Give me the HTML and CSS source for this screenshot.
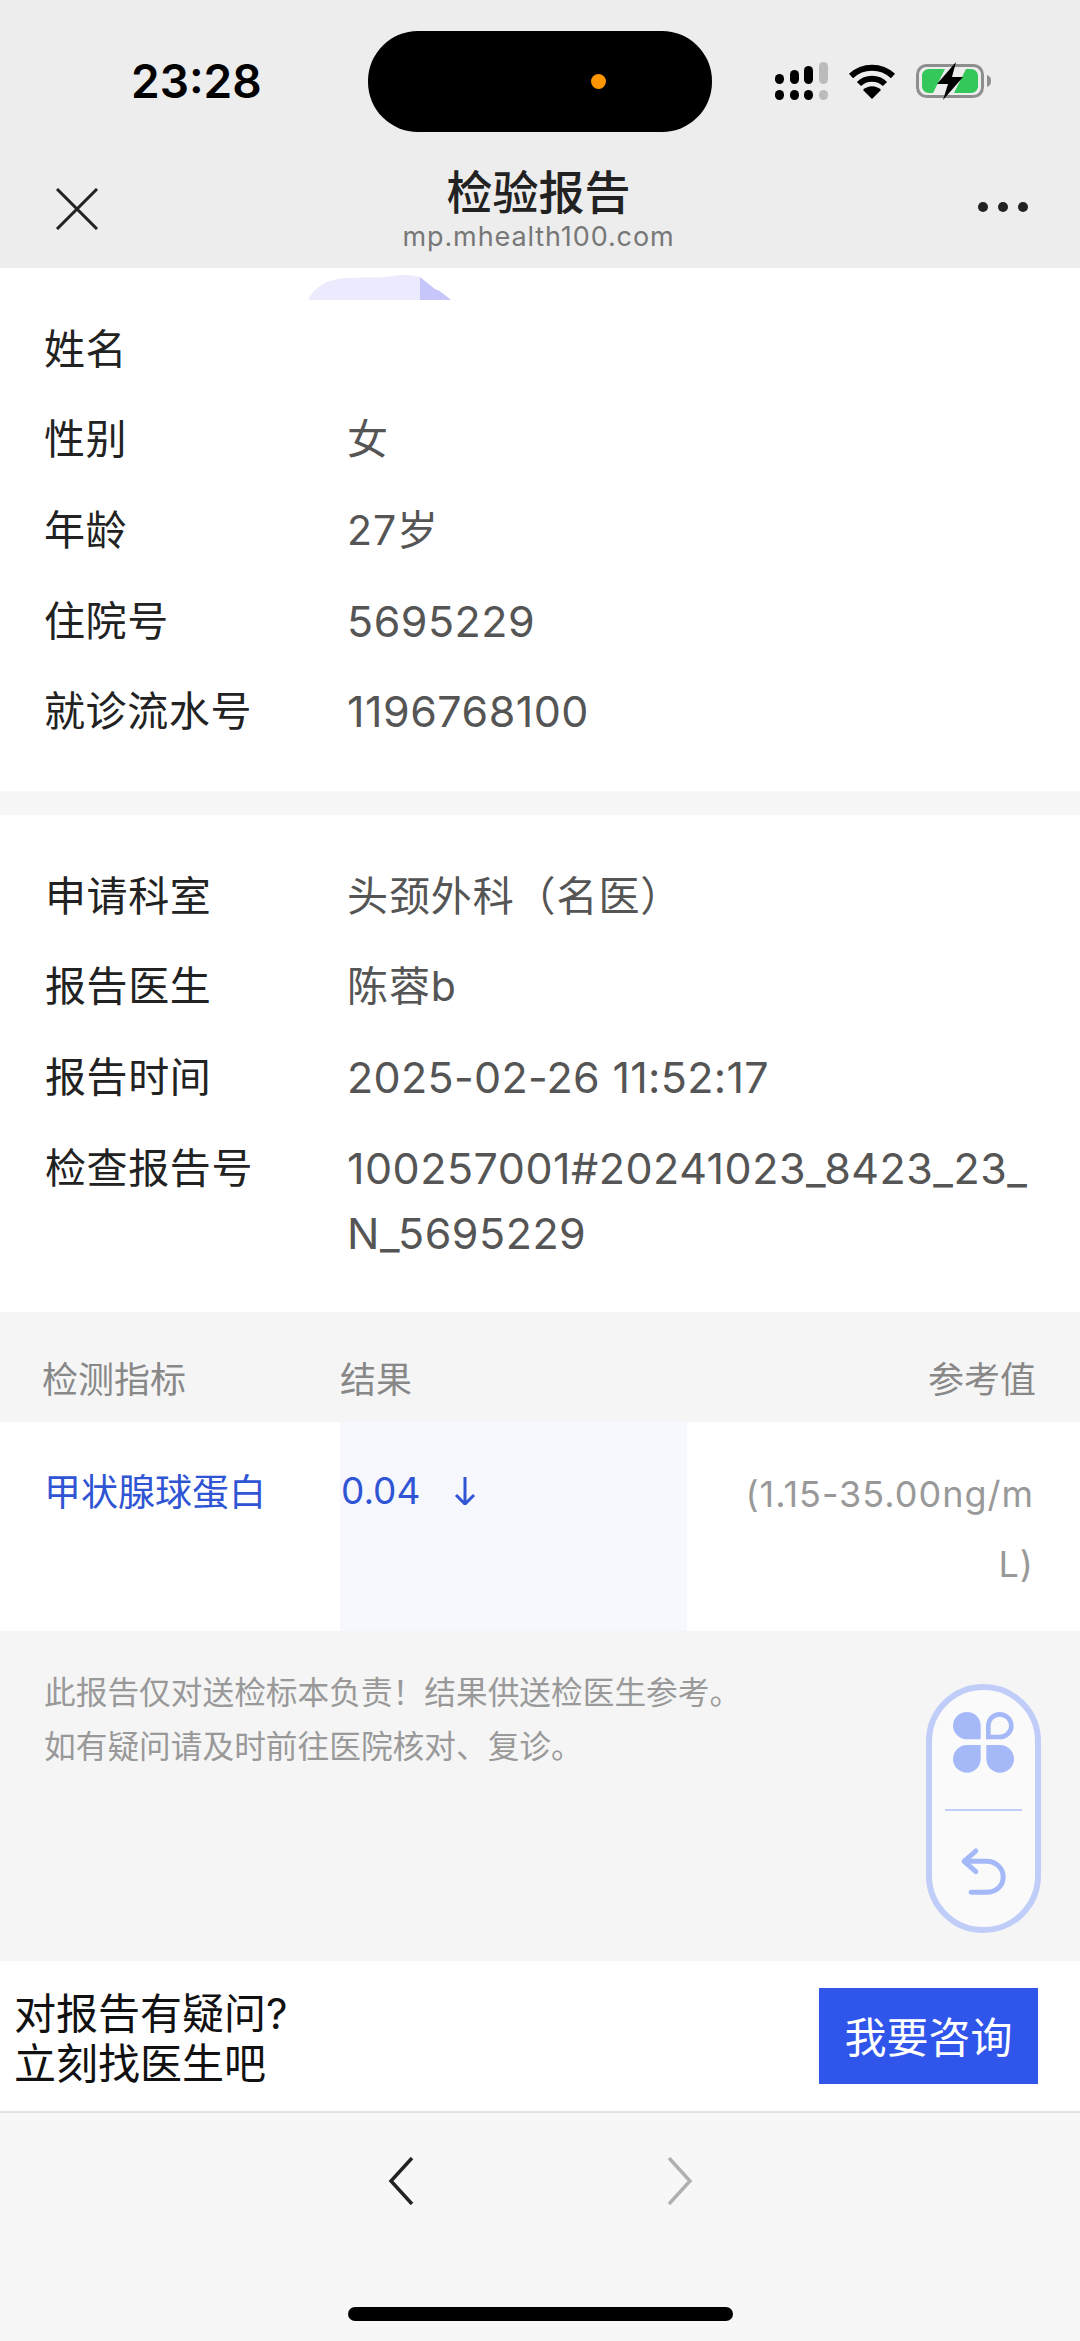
FILE: index.html
```html
<!DOCTYPE html>
<html lang="zh">
<head>
    <meta charset="utf-8">
    <link rel="stylesheet" href="styles.css">
</head>
<body>
    <div class="top">
        <div class="status">
            <span class="time">23:28</span>
            <div class="island"><span class="dot"></span></div>
            <svg class="signal" viewBox="0 0 54 38">
                <rect x="0" y="12" width="9" height="10" rx="4.5"/>
                <rect x="15" y="8" width="9" height="14" rx="4.5"/>
                <rect x="29" y="4" width="9" height="18" rx="4.5"/>
                <rect x="44" y="0" width="9" height="22" rx="4.5" fill="#bbb"/>
                <rect x="0" y="28" width="9" height="10" rx="4.5"/>
                <rect x="15" y="28" width="9" height="10" rx="4.5"/>
                <rect x="29" y="28" width="9" height="10" rx="4.5"/>
                <rect x="44" y="28" width="9" height="10" rx="4.5" fill="#bbb"/>
            </svg>
            <svg class="wifi" viewBox="0 0 48 36">
                <path d="M3 13C15 2 33 2 45 13" fill="none" stroke="#000" stroke-width="6"/>
                <path d="M11 21C18 14 30 14 37 21" fill="none" stroke="#000" stroke-width="6"/>
                <path d="M15 27C20 22 28 22 33 27L24 36Z"/>
            </svg>
            <svg class="battery" viewBox="0 0 76 38">
                <rect x="1.5" y="3.5" width="65" height="31" rx="9" fill="none" stroke="#8e8e8e" stroke-width="3"/>
                <path d="M13 7H29L17 31H13C9 31 6 28 6 24V14C6 10 9 7 13 7ZM40 7H55C59 7 62 10 62 14V24C62 28 59 31 55 31H38L50 7Z" fill="#34c759"/>
                <path d="M40 0L21 22H32L27 38L47 15H36Z"/>
                <path d="M71 13C74 14 75 16 75 19C75 22 74 24 71 25Z" fill="#8e8e8e"/>
            </svg>
        </div>
        <div class="titlebar">
            <svg class="close" viewBox="0 0 44 42">
                <path d="M2 1L42 41M42 1L2 41" fill="none" stroke="#222" stroke-width="3"/>
            </svg>
            <div class="title">
                <div class="title-main">检验报告</div>
                <div class="title-url">mp.mhealth100.com</div>
            </div>
            <div class="more"><i></i><i></i><i></i></div>
        </div>
    </div>

    <div class="section section-patient">
        <svg class="blob" viewBox="0 0 143 25">
            <path d="M0 25C8 10 20 4 40 3C60 2 75 3 85 1C95 -1 105 0 112 2V25Z" fill="#ecebfd"/>
            <path d="M112 2L127 14C133 16 137 20 143 25H112Z" fill="#c6c6fa"/>
        </svg>
        <div class="row"><span class="label">姓名</span><span class="value"></span></div>
        <div class="row"><span class="label">性别</span><span class="value">女</span></div>
        <div class="row"><span class="label">年龄</span><span class="value">27岁</span></div>
        <div class="row"><span class="label">住院号</span><span class="value num">5695229</span></div>
        <div class="row"><span class="label">就诊流水号</span><span class="value num">1196768100</span></div>
    </div>

    <div class="section section-report">
        <div class="row"><span class="label">申请科室</span><span class="value">头颈外科（名医）</span></div>
        <div class="row"><span class="label">报告医生</span><span class="value">陈蓉b</span></div>
        <div class="row"><span class="label">报告时间</span><span class="value num date">2025-02-26 11:52:17</span></div>
        <div class="row"><span class="label">检查报告号</span><span class="value num">100257001#20241023_8423_23_N_5695229</span></div>
    </div>

    <div class="table-head">
        <span class="th-name">检测指标</span>
        <span class="th-result">结果</span>
        <span class="th-ref">参考值</span>
    </div>
    <div class="table-row">
        <div class="td-name">甲状腺球蛋白</div>
        <div class="td-result">
            <span>0.04</span>
            <svg class="down" viewBox="0 0 22 28">
                <path d="M11 0V27M2 18L11 27L20 18" fill="none" stroke="#2f55d4" stroke-width="3"/>
            </svg>
        </div>
        <div class="td-ref">(1.15-35.00ng/mL)</div>
    </div>

    <div class="notes">
        <p>此报告仅对送检标本负责！结果供送检医生参考。</p>
        <p>如有疑问请及时前往医院核对、复诊。</p>
        <div class="float-btn">
            <svg class="clover" viewBox="220 155 183 183">
                <path d="M303 237H262C239 237 220 218 220 196C220 173 239 155 262 155C285 155 303 173 303 196Z" fill="#a5b9f8"/>
                <path d="M326 230H360C379 230 395 215 395 196C395 177 379 162 360 162C341 162 326 177 326 196Z" fill="none" stroke="#a5b9f8" stroke-width="14"/>
                <path d="M303 254V296C303 319 285 337 262 337C239 337 220 319 220 296C220 273 239 254 262 254Z" fill="#a5b9f8"/>
                <path d="M320 254H361C384 254 403 273 403 296C403 319 384 337 361 337C338 337 320 319 320 296Z" fill="#a5b9f8"/>
            </svg>
            <div class="float-line"></div>
            <svg class="back" viewBox="240 562 146 150">
                <path d="M290 574L255 605L290 636M255 605H322C350 605 372 625 372 652C372 680 350 698 322 698H276" fill="none" stroke="#a5b9f8" stroke-width="15" stroke-linecap="round" stroke-linejoin="round"/>
            </svg>
        </div>
    </div>

    <div class="cta">
        <div class="cta-text">对报告有疑问?<br>立刻找医生吧</div>
        <div class="cta-btn">我要咨询</div>
    </div>

    <div class="toolbar">
        <div class="arrows">
            <svg class="chevron" viewBox="0 0 26 48">
                <path d="M24 1L3 24L24 47" fill="none" stroke="#222" stroke-width="3.5"/>
            </svg>
            <svg class="chevron" viewBox="0 0 26 48">
                <path d="M2 1L23 24L2 47" fill="none" stroke="#b0b0b0" stroke-width="3.5"/>
            </svg>
        </div>
        <div class="home-bar"></div>
    </div>
</body>
</html>
```

FILE: styles.css
```css
* {
    box-sizing: border-box;
}

body {
    margin: 0;
    width: 1080px;
    height: 2341px;
    overflow: hidden;
    background: #f7f7f7;
    font-family: Inter, "Noto Sans CJK SC", sans-serif;
    color: #222;
}

p {
    margin: 0;
}

/* top bar */
.top {
    height: 268px;
    background: #ededed;
}

.status {
    height: 149px;
    padding-top: 31px;
    display: flex;
    align-items: flex-start;
}

.time {
    width: 237px;
    margin-left: 131px;
    margin-top: 17px;
    font-size: 46px;
    line-height: 66px;
    font-weight: 600;
    color: #000;
}

.island {
    width: 344px;
    height: 101px;
    border-radius: 50px;
    background: #000;
    position: relative;
}

.dot {
    position: absolute;
    left: 223px;
    top: 43px;
    width: 15px;
    height: 15px;
    border-radius: 50%;
    background: #ff9500;
}

.signal {
    width: 54px;
    height: 38px;
    margin: 31px 0 0 63px;
}

.wifi {
    width: 48px;
    height: 36px;
    margin: 32px 0 0 19px;
}

.battery {
    width: 76px;
    height: 38px;
    margin: 31px 0 0 20px;
}

.titlebar {
    height: 119px;
    display: flex;
    align-items: flex-start;
    justify-content: space-between;
    padding: 0 52px 0 55px;
}

.close {
    width: 44px;
    height: 42px;
    margin-top: 39px;
}

.title {
    text-align: center;
    margin-top: 15px;
}

.title-main {
    font-size: 46px;
    line-height: 56px;
    font-weight: 500;
}

.title-url {
    font-size: 27px;
    line-height: 34px;
    color: #777;
    letter-spacing: 0.9px;
}

.more {
    display: flex;
    gap: 10px;
    margin-top: 53px;
}

.more i {
    width: 10px;
    height: 10px;
    border-radius: 50%;
    background: #222;
}

/* info sections */
.section {
    background: #fff;
    position: relative;
}

.section-patient {
    padding: 36px 0 34px 44px;
}

.section-report {
    margin-top: 24px;
    padding: 36px 0 34px 45px;
}

.blob {
    position: absolute;
    left: 308px;
    top: 7px;
    width: 143px;
    height: 25px;
}

.row {
    display: flex;
    padding: 12.8px 0;
    font-size: 41px;
    line-height: 65px;
}

.label {
    flex: none;
    color: #222;
    letter-spacing: 0.6px;
}

.section-patient .label {
    width: 303px;
}

.section-report .label {
    width: 302px;
}

.value {
    width: 690px;
    color: #555;
    letter-spacing: 0.9px;
    word-break: break-all;
}

.num {
    font-size: 43px;
    letter-spacing: 0.5px;
}

.date {
    letter-spacing: 0.3px;
}

/* table */
.table-head {
    height: 110px;
    background: #f5f5f5;
    display: grid;
    grid-template-columns: 298px 1fr auto;
    align-items: center;
    padding: 20px 44px 0 42px;
    font-size: 36px;
    color: #888;
}

.table-row {
    height: 209px;
    background: #fff;
    display: grid;
    grid-template-columns: 340px 347px 393px;
    font-size: 37px;
    line-height: 70px;
}

.td-name {
    padding: 36px 0 0 44px;
    color: #2f55d4;
}

.td-result {
    padding: 34px 0 0 1px;
    background: #f6f8fd;
    color: #2f55d4;
    display: flex;
    align-items: flex-start;
}

.down {
    width: 22px;
    height: 28px;
    margin: 21px 0 0 34px;
}

.td-ref {
    padding: 37px 46px 0 40px;
    text-align: right;
    font-size: 36px;
    letter-spacing: 1px;
    color: #999;
    word-break: break-all;
}

/* notes */
.notes {
    height: 330px;
    background: #f5f5f5;
    padding: 35px 0 0 44px;
    font-size: 31.7px;
    line-height: 54px;
    color: #999;
    position: relative;
}

.float-btn {
    position: absolute;
    left: 926px;
    top: 53px;
    width: 115px;
    height: 249px;
    border: 6px solid #c0cdf8;
    border-radius: 58px;
    background: #fafafa;
    display: flex;
    flex-direction: column;
    align-items: center;
}

.clover {
    width: 61px;
    height: 61px;
    margin-top: 22px;
}

.float-line {
    width: 77px;
    height: 2px;
    margin-top: 36px;
    background: #c0cdf8;
}

.back {
    width: 49px;
    height: 50px;
    margin-top: 36px;
}

/* call to action */
.cta {
    height: 152px;
    background: #fff;
    border-bottom: 2px solid #e2e2e2;
    display: flex;
    justify-content: space-between;
    padding: 28px 42px 0 14px;
}

.cta-text {
    font-size: 42px;
    line-height: 50px;
    color: #111;
}

.cta-btn {
    width: 219px;
    height: 96px;
    margin-top: -1px;
    background: #3055ea;
    color: #fff;
    font-size: 42px;
    line-height: 100px;
    text-align: center;
}

/* bottom toolbar */
.toolbar {
    display: flex;
    flex-direction: column;
    align-items: center;
}

.arrows {
    display: flex;
    gap: 253px;
    margin-top: 44px;
    margin-left: 1px;
}

.chevron {
    width: 26px;
    height: 48px;
}

.home-bar {
    width: 385px;
    height: 14px;
    margin-top: 102px;
    margin-left: 1px;
    border-radius: 7px;
    background: #000;
}
```
